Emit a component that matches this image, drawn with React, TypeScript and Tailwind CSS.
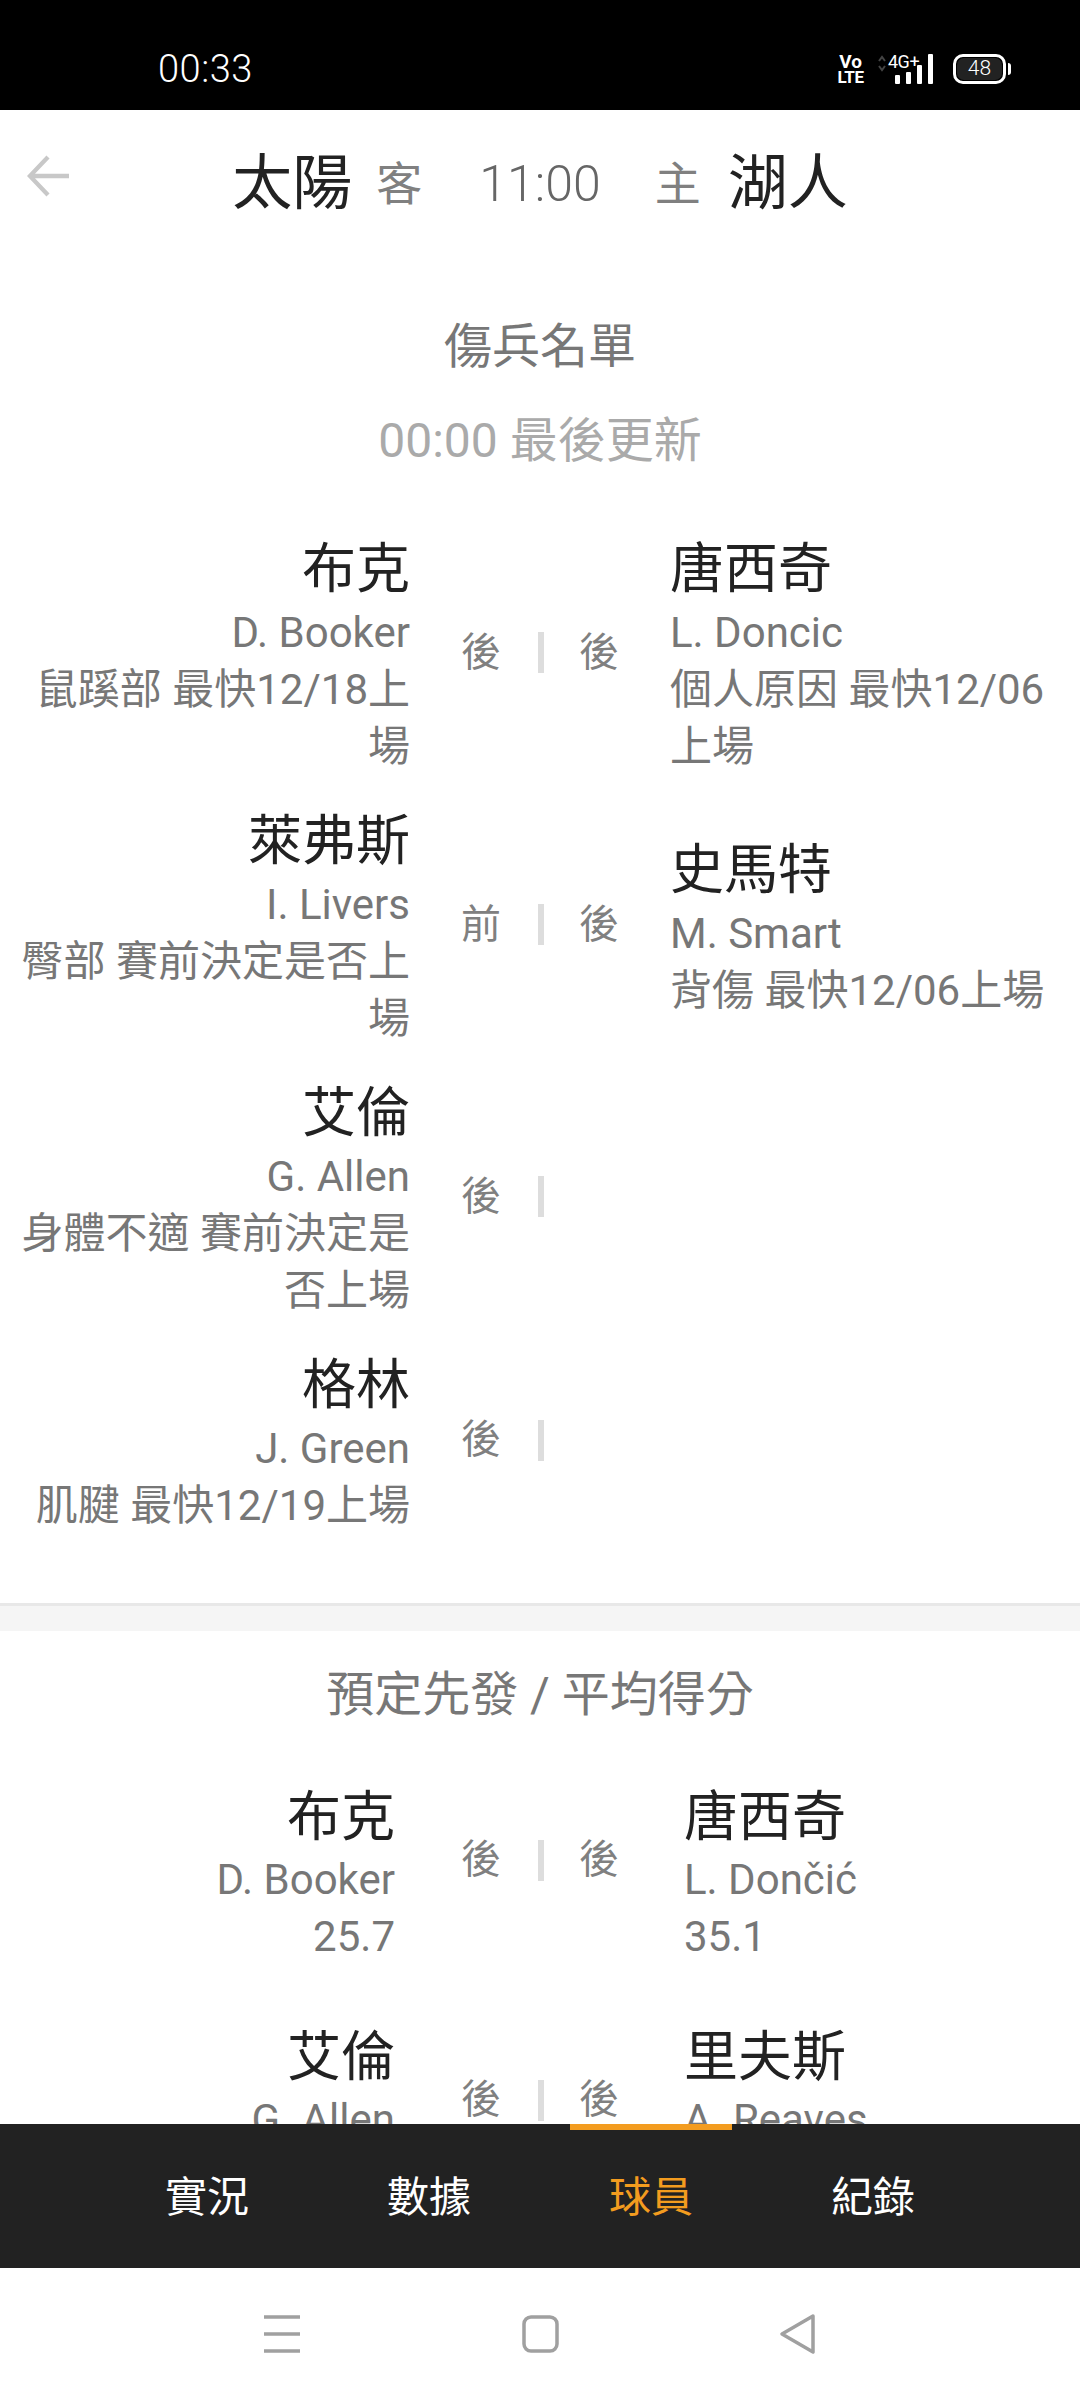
import React from "react";

type P = { name: string; en: string; info: string; pos: string };

function Side({ p, align, cls, nameCls }: { p?: P; align: "left" | "right"; cls: string; nameCls: string }) {
  if (!p) return <div className={cls} />;
  return (
    <div className={`${cls} ${align === "right" ? "text-right" : "text-left"}`}>
      <div className={`text-[54px] text-[#222222] ${nameCls}`}>{p.name}</div>
      <div className="text-[42px] leading-[57px] text-[#777777]">{p.en}</div>
      <div className="text-[42px] leading-[57px] text-[#777777]">{p.info}</div>
    </div>
  );
}

function Pos({ l, r, cls }: { l?: string; r?: string; cls?: string }) {
  return (
    <div className={`flex items-center justify-center text-[40px] leading-[56px] text-[#808080] ${cls ?? ""}`}>
      <span className="w-[40px] text-center">{l}</span>
      <span className="ml-[37px] mr-[35px] h-[41px] w-[6px] bg-[#dddddd]" />
      <span className="w-[40px] text-center">{r}</span>
    </div>
  );
}

const injured: { a: P; b?: P }[] = [
  {
    a: { name: "布克", en: "D. Booker", info: "鼠蹊部 最快12/18上場", pos: "後" },
    b: { name: "唐西奇", en: "L. Doncic", info: "個人原因 最快12/06上場", pos: "後" },
  },
  {
    a: { name: "萊弗斯", en: "I. Livers", info: "臀部 賽前決定是否上場", pos: "前" },
    b: { name: "史馬特", en: "M. Smart", info: "背傷 最快12/06上場", pos: "後" },
  },
  { a: { name: "艾倫", en: "G. Allen", info: "身體不適 賽前決定是否上場", pos: "後" } },
  { a: { name: "格林", en: "J. Green", info: "肌腱 最快12/19上場", pos: "後" } },
];

const starters: { a: P; b: P }[] = [
  {
    a: { name: "布克", en: "D. Booker", info: "25.7", pos: "後" },
    b: { name: "唐西奇", en: "L. Dončić", info: "35.1", pos: "後" },
  },
  {
    a: { name: "艾倫", en: "G. Allen", info: "12.5", pos: "後" },
    b: { name: "里夫斯", en: "A. Reaves", info: "19.2", pos: "後" },
  },
];

function StatusBar() {
  return (
    <div className="flex h-[110px] shrink-0 items-center justify-between bg-black pl-[158px] pr-[69px] pt-[27px] text-white">
      <span className="text-[38px] font-light leading-none tracking-[0.5px]">00:33</span>
      <div className="flex items-center">
        <div className="flex w-[23px] flex-col items-center font-bold">
          <span className="text-[19px] leading-[17px]">Vo</span>
          <span className="text-[17px] leading-[14px] tracking-[-0.5px]">LTE</span>
        </div>
        <div className="relative ml-[15px] h-[30px] w-[58px]">
          <svg viewBox="0 0 58 30" className="h-[30px] w-[58px]">
            <path d="M2 7l3-4 3 4M2 12l3 4 3-4" fill="none" stroke="#444" strokeWidth="2" />
            <rect x="18" y="21" width="5" height="9" rx="1" fill="#fff" />
            <rect x="29" y="18" width="5" height="12" rx="1" fill="#fff" />
            <rect x="40" y="11" width="5" height="19" rx="1" fill="#fff" />
            <rect x="51" y="0" width="5" height="30" rx="1" fill="#fff" />
          </svg>
          <span className="absolute left-[11px] top-[-2px] text-[18px] leading-[20px] tracking-[-0.5px]">4G+</span>
        </div>
        <div className="ml-[18px] flex h-[30px] w-[53px] items-center justify-center rounded-[10px] border-[3px] border-white">
          <span className="flex h-[22px] w-[45px] items-center justify-center rounded-[7px] bg-[#222222] text-[21px] font-light leading-none">48</span>
        </div>
        <span className="ml-[2px] h-[12px] w-[3px] rounded-r-sm bg-white" />
      </div>
    </div>
  );
}

function Header() {
  return (
    <div className="relative flex h-[148px] items-center justify-center">
      <svg viewBox="0 0 44 44" className="absolute left-[27px] top-[44px] h-[44px] w-[42px]" fill="none" stroke="#c8c8c8" strokeWidth="4.5">
        <path d="M22 2L3 22l19 20M3 22h41" />
      </svg>
      <span className="text-[60px] leading-none text-[#222222]">太陽</span>
      <span className="ml-[24px] text-[46px] leading-none text-[#808080]">客</span>
      <span className="ml-[57px] text-[50px] font-light leading-none text-[#666666]">11:00</span>
      <span className="ml-[54px] text-[46px] leading-none text-[#808080]">主</span>
      <span className="ml-[27px] text-[60px] leading-none text-[#222222]">湖人</span>
    </div>
  );
}

export default function App() {
  return (
    <div className="flex h-[2400px] w-[1080px] flex-col overflow-hidden bg-white font-['Roboto','Noto_Sans_CJK_TC',sans-serif]">
      <StatusBar />
      <main className="min-h-0 flex-1 overflow-hidden">
        <Header />
        <section className="pb-[69px] pt-[53px]">
          <h2 className="text-center text-[48px] font-normal leading-[72px] text-[#777777]">傷兵名單</h2>
          <p className="mt-[22px] text-center text-[48px] leading-[72px] text-[#aaaaaa]">00:00 最後更新</p>
          <div className="mt-[59px] flex flex-col gap-[33px]">
            {injured.map((r, i) => (
              <div key={i} className="grid grid-cols-[410px_260px_410px] items-center">
                <Side p={r.a} align="right" cls="pl-[20px]" nameCls="leading-[68px]" />
                <Pos l={r.a.pos} r={r.b?.pos} cls="mb-[6px]" />
                <Side p={r.b} align="left" cls="pr-[20px]" nameCls="leading-[68px]" />
              </div>
            ))}
          </div>
        </section>
        <div className="h-[28px] border-t-[3px] border-[#e8e8e8] bg-[#f5f5f5]" />
        <section className="pt-[28px]">
          <h2 className="text-center text-[48px] font-normal leading-[72px] text-[#777777]">預定先發 / 平均得分</h2>
          <div className="mt-[54px] flex flex-col gap-[60px]">
            {starters.map((r, i) => (
              <div key={i} className="grid grid-cols-[410px_260px_410px] items-start">
                <Side p={r.a} align="right" cls="pl-[20px] pr-[15px]" nameCls="leading-[66px]" />
                <Pos l={r.a.pos} r={r.b.pos} cls="mt-[47px]" />
                <Side p={r.b} align="left" cls="pl-[14px] pr-[20px]" nameCls="leading-[66px]" />
              </div>
            ))}
          </div>
        </section>
      </main>
      <nav className="flex h-[144px] shrink-0 items-center bg-[#222222] px-[96px] pt-[2px] text-[42px] text-white">
        <span className="w-[222px] text-center">實況</span>
        <span className="w-[222px] text-center">數據</span>
        <span className="relative flex h-full w-[222px] items-center justify-center text-[#f39c1f]">
          <span className="absolute left-[30px] top-[-2px] h-[6px] w-[162px] bg-[#f39c1f]" />
          球員
        </span>
        <span className="w-[222px] text-center">紀錄</span>
      </nav>
      <div className="flex h-[132px] shrink-0 items-center justify-center bg-white">
        <svg viewBox="0 0 560 44" className="h-[44px] w-[560px]" fill="none" stroke="#a0a0a0" strokeWidth="3.5">
          <path d="M4 5h36M4 22h36M4 39h36" />
          <rect x="264" y="5" width="33" height="34" rx="7" />
          <path d="M553 4L522 22l31 18z" strokeLinejoin="round" />
        </svg>
      </div>
    </div>
  );
}
